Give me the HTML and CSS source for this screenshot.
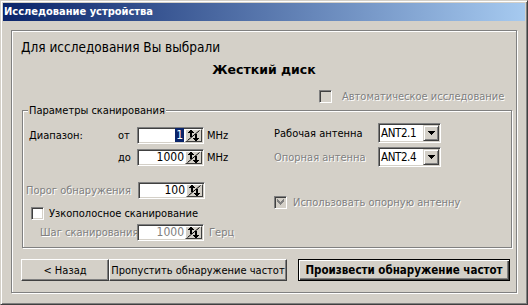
FILE: index.html
```html
<!DOCTYPE html>
<html lang="ru">
<head>
    <meta charset="UTF-8">
    <title>Исследование устройства</title>
    <link rel="stylesheet" href="styles.css">
</head>
<body>

<div class="window">
    <div class="titlebar">Исследование устройства</div>

    <div class="client">
        <div class="panel">
            <div class="intro">Для исследования Вы выбрали</div>
            <div class="device">Жесткий диск</div>

            <div class="check auto disabled"><span class="box"></span>Автоматическое исследование</div>

            <div class="group">
                <div class="legend">Параметры сканирования</div>
                <div class="group-body">

                    <!-- left: range / threshold / step -->
                    <div class="col-left">
                        <div class="row row-range">
                            <span class="label">Диапазон:</span>
                            <span class="pre">от</span>
                            <span class="spin">
                                <span class="value"><span class="sel">1</span></span>
                                <span class="spin-btn"><svg width="13" height="11" viewBox="0 0 13 11"><path d="M0.5 10.5 L12.5 0.5" stroke="#000" fill="none"/><path d="M3 0h2v1h-2zM2 1h4v1h-4zM1 2h6v1h-6zM3 3h2v4h-2z" fill="#000" shape-rendering="crispEdges"/><path d="M8 4h2v4h-2zM6 8h6v1h-6zM7 9h4v1h-4zM8 10h2v1h-2z" fill="#000" shape-rendering="crispEdges"/></svg></span>
                            </span>
                            <span class="unit">MHz</span>
                        </div>
                        <div class="row row-range row-to">
                            <span class="label"></span>
                            <span class="pre">до</span>
                            <span class="spin">
                                <span class="value">1000</span>
                                <span class="spin-btn"><svg width="13" height="11" viewBox="0 0 13 11"><path d="M0.5 10.5 L12.5 0.5" stroke="#000" fill="none"/><path d="M3 0h2v1h-2zM2 1h4v1h-4zM1 2h6v1h-6zM3 3h2v4h-2z" fill="#000" shape-rendering="crispEdges"/><path d="M8 4h2v4h-2zM6 8h6v1h-6zM7 9h4v1h-4zM8 10h2v1h-2z" fill="#000" shape-rendering="crispEdges"/></svg></span>
                            </span>
                            <span class="unit">MHz</span>
                        </div>
                        <div class="row row-threshold">
                            <span class="label disabled">Порог обнаружения</span>
                            <span class="spin">
                                <span class="value">100</span>
                                <span class="spin-btn"><svg width="13" height="11" viewBox="0 0 13 11"><path d="M0.5 10.5 L12.5 0.5" stroke="#000" fill="none"/><path d="M3 0h2v1h-2zM2 1h4v1h-4zM1 2h6v1h-6zM3 3h2v4h-2z" fill="#000" shape-rendering="crispEdges"/><path d="M8 4h2v4h-2zM6 8h6v1h-6zM7 9h4v1h-4zM8 10h2v1h-2z" fill="#000" shape-rendering="crispEdges"/></svg></span>
                            </span>
                        </div>
                        <div class="check narrow"><span class="box"></span>Узкополосное сканирование</div>
                        <div class="row row-step">
                            <span class="label disabled">Шаг сканирования</span>
                            <span class="spin">
                                <span class="value disabled-value">1000</span>
                                <span class="spin-btn"><svg width="13" height="11" viewBox="0 0 13 11"><path d="M0.5 10.5 L12.5 0.5" stroke="#000" fill="none"/><path d="M3 0h2v1h-2zM2 1h4v1h-4zM1 2h6v1h-6zM3 3h2v4h-2z" fill="#000" shape-rendering="crispEdges"/><path d="M8 4h2v4h-2zM6 8h6v1h-6zM7 9h4v1h-4zM8 10h2v1h-2z" fill="#000" shape-rendering="crispEdges"/></svg></span>
                            </span>
                            <span class="unit disabled">Герц</span>
                        </div>
                    </div>

                    <!-- right: antennas -->
                    <div class="col-right">
                        <div class="row row-antenna">
                            <span class="label">Рабочая антенна</span>
                            <span class="combo">
                                <span class="combo-text">ANT2.1</span>
                                <span class="combo-btn"><svg width="7" height="4" viewBox="0 0 7 4" shape-rendering="crispEdges"><path d="M0 0h7v1h-7zM1 1h5v1h-5zM2 2h3v1h-3zM3 3h1v1h-1z" fill="#000"/></svg></span>
                            </span>
                        </div>
                        <div class="row row-antenna row-ref">
                            <span class="label disabled">Опорная антенна</span>
                            <span class="combo">
                                <span class="combo-text">ANT2.4</span>
                                <span class="combo-btn"><svg width="7" height="4" viewBox="0 0 7 4" shape-rendering="crispEdges"><path d="M0 0h7v1h-7zM1 1h5v1h-5zM2 2h3v1h-3zM3 3h1v1h-1z" fill="#000"/></svg></span>
                            </span>
                        </div>
                        <div class="check use-ref disabled">
                            <span class="box"><svg width="7" height="7" viewBox="0 0 7 7" shape-rendering="crispEdges"><path d="M6 0h1v3h-1zM5 1h1v3h-1zM4 2h1v3h-1zM3 3h1v3h-1zM2 2h1v3h-1zM1 1h1v3h-1zM0 0h1v3h-1z" fill="#808080"/></svg></span>
                            Использовать опорную антенну
                        </div>
                    </div>

                </div>
            </div>

            <div class="buttons">
                <button class="btn btn-back">&lt; Назад</button>
                <button class="btn btn-skip">Пропустить обнаружение частот</button>
                <button class="btn btn-default">Произвести обнаружение частот</button>
            </div>
        </div>
    </div>
</div>

</body>
</html>
```

FILE: styles.css
```css
* {
    box-sizing: border-box;
}
body {
    margin: 0;
    background-color: #d4d0c8;
    font-family: "DejaVu Sans Condensed", "DejaVu Sans", sans-serif;
    font-stretch: condensed;
    font-size: 11px;
    color: #000;
}

/* --- window frame --- */
.window {
    width: 528px;
    height: 305px;
    border: 1px solid;
    border-color: #d4d0c8 #404040 #404040 #d4d0c8;
    box-shadow: inset 1px 1px #fff, inset -1px -1px #808080;
    padding: 2px;
    display: flex;
    flex-direction: column;
}
.titlebar {
    height: 18px;
    line-height: 18px;
    padding-left: 1px;
    background: linear-gradient(to right, #0a246a, #a6caf0);
    color: #fff;
    font-weight: bold;
    font-size: 11px;
}
.client {
    flex: 1;
    padding: 9px 8px 9px 8px;
    display: flex;
}
.panel {
    flex: 1;
    border: 1px solid #808080;
    box-shadow: inset 1px 1px #fff, 1px 1px #fff;
    display: flex;
    flex-direction: column;
}

.intro {
    margin-top: 8px;
    padding-left: 9px;
    font-size: 13.5px;
    line-height: 16px;
}
.device {
    margin-top: 6px;
    text-align: center;
    font-family: "DejaVu Sans", sans-serif;
    font-stretch: normal;
    font-weight: bold;
    font-size: 12.5px;
    line-height: 18px;
}

.disabled {
    color: #808080;
    text-shadow: 1px 1px 0 #fff;
}

/* --- checkboxes --- */
.check {
    display: flex;
    align-items: center;
    height: 13px;
    line-height: 13px;
    white-space: nowrap;
}
.check .box {
    width: 13px;
    height: 13px;
    flex: none;
    border: 1px solid;
    border-color: #808080 #fff #fff #808080;
    box-shadow: inset 1px 1px #404040, inset -1px -1px #d4d0c8;
    background-color: #fff;
    display: flex;
    align-items: center;
    justify-content: center;
}
.check.disabled .box {
    background-color: #d4d0c8;
}
.auto {
    margin-top: 11px;
    margin-left: 307px;
    gap: 10px;
}
.narrow {
    margin-top: 8px;
    padding-left: 8px;
    gap: 5px;
}
.use-ref {
    margin-top: 29px;
    gap: 6px;
}

/* --- group box --- */
.group {
    margin: 7px 4px 0 10px;
    height: 138px;
    border: 1px solid #808080;
    box-shadow: inset 1px 1px #fff, 1px 1px #fff;
}
.legend {
    width: fit-content;
    margin: -7px 0 0 5px;
    padding: 0 1px;
    line-height: 14px;
    background-color: #d4d0c8;
}
.group-body {
    display: flex;
    align-items: flex-start;
}
.col-left {
    width: 250px;
    margin-top: 9px;
}
.col-right {
    margin-top: 5px;
    padding-left: 1px;
}

.row {
    display: flex;
    align-items: center;
    white-space: nowrap;
}
.row .label {
    flex: none;
}
.row-range {
    padding-left: 6px;
}
.row-range .label {
    width: 89px;
}
.row-range .pre {
    width: 19px;
}
.row-to {
    margin-top: 5px;
}
.row-threshold {
    margin-top: 16px;
    padding-left: 3px;
}
.row-threshold .label {
    width: 112px;
}
.row-step {
    margin-top: 4px;
    padding-left: 17px;
}
.row-step .label {
    width: 97px;
}
.unit {
    margin-left: 3px;
}
.row-step .unit {
    margin-left: 5px;
}

/* --- spin edit --- */
.spin {
    width: 67px;
    height: 17px;
    display: flex;
    border: 1px solid;
    border-color: #808080 #fff #fff #808080;
    box-shadow: inset 1px 1px #404040, inset -1px -1px #d4d0c8;
    padding: 1px;
}
.spin .value {
    flex: 1;
    background-color: #fff;
    text-align: right;
    font-size: 12px;
    line-height: 13px;
    padding-right: 1px;
}
.spin .sel {
    background-color: #0a246a;
    color: #fff;
    padding: 0 1px;
}
.spin .disabled-value {
    color: #808080;
}
.spin-btn {
    width: 17px;
    flex: none;
    border: 1px solid;
    border-color: #fff #404040 #404040 #fff;
    background-color: #d4d0c8;
    display: flex;
    align-items: center;
    justify-content: center;
}

/* --- combo --- */
.row-antenna .label {
    width: 104px;
}
.row-ref {
    margin-top: 4px;
}
.combo {
    width: 63px;
    height: 20px;
    display: flex;
    border: 1px solid;
    border-color: #808080 #fff #fff #808080;
    box-shadow: inset 1px 1px #404040, inset -1px -1px #d4d0c8;
    padding: 1px;
    background-color: #fff;
}
.combo-text {
    flex: 1;
    min-width: 0;
    overflow: hidden;
    padding-left: 1px;
    line-height: 16px;
    font-size: 11.5px;
    letter-spacing: -0.4px;
}
.combo-btn {
    width: 16px;
    flex: none;
    border: 1px solid;
    border-color: #d4d0c8 #404040 #404040 #d4d0c8;
    box-shadow: inset 1px 1px #fff, inset -1px -1px #808080;
    background-color: #d4d0c8;
    display: flex;
    align-items: center;
    justify-content: center;
}

/* --- buttons --- */
.buttons {
    margin-top: 11px;
    padding-left: 9px;
    display: flex;
}
.btn {
    height: 22px;
    padding: 0;
    font-family: "DejaVu Sans Condensed", "DejaVu Sans", sans-serif;
    font-stretch: condensed;
    font-size: 11px;
    color: #000;
    background-color: #d4d0c8;
    border: 1px solid;
    border-color: #fff #404040 #404040 #fff;
    box-shadow: inset -1px -1px #808080;
}
.btn-back {
    width: 88px;
}
.btn-skip {
    width: 178px;
}
.btn-default {
    width: 212px;
    margin-left: 11px;
    font-weight: bold;
    font-size: 11.5px;
    border-color: #000;
    box-shadow: inset 1px 1px #fff, inset -1px -1px #404040, inset -2px -2px #808080;
}
```
